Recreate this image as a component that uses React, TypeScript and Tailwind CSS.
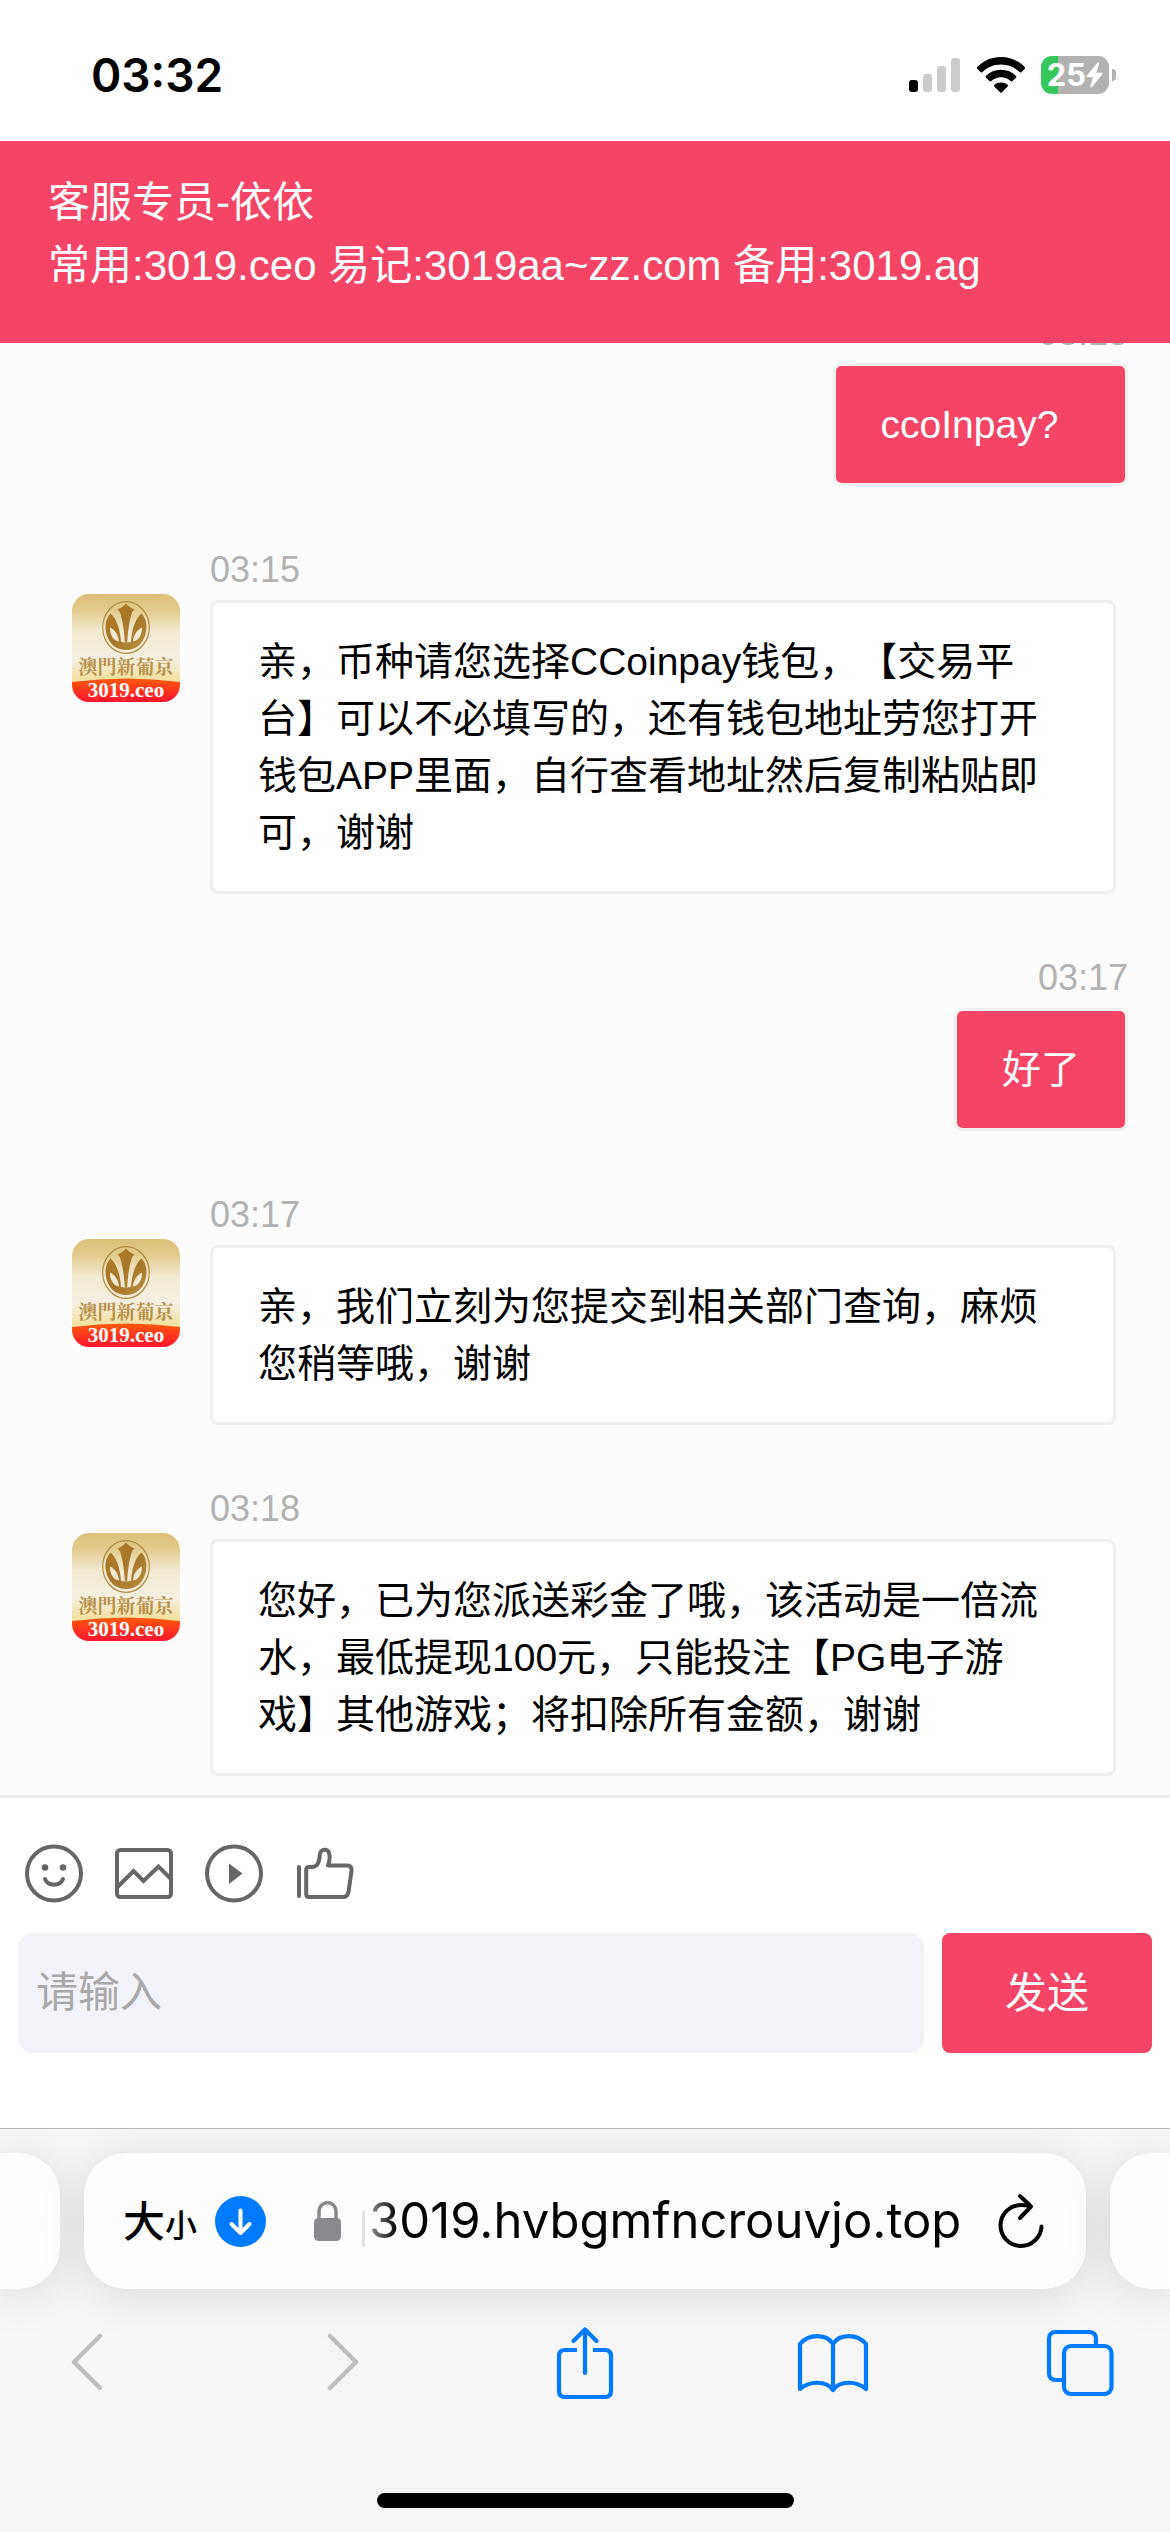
import React from "react";

type Message = { id: number; from: "agent" | "me"; time: string; text: string };

const messages: Message[] = [
  { id: 1, from: "me", time: "03:15", text: "ccoInpay?\u00a0\u00a0" },
  {
    id: 2,
    from: "agent",
    time: "03:15",
    text: "亲，币种请您选择CCoinpay钱包，【交易平台】可以不必填写的，还有钱包地址劳您打开钱包APP里面，自行查看地址然后复制粘贴即可，谢谢",
  },
  { id: 3, from: "me", time: "03:17", text: "好了" },
  { id: 4, from: "agent", time: "03:17", text: "亲，我们立刻为您提交到相关部门查询，麻烦您稍等哦，谢谢" },
  {
    id: 5,
    from: "agent",
    time: "03:18",
    text: "您好，已为您派送彩金了哦，该活动是一倍流水，最低提现100元，只能投注【PG电子游戏】其他游戏；将扣除所有金额，谢谢",
  },
];

function StatusBar() {
  return (
    <div className="flex h-[141px] shrink-0 items-center justify-between bg-white pt-2 pr-[54px] pl-[91px] font-['Inter',sans-serif]">
      <span className="text-[46px] leading-[48px] font-semibold text-black">03:32</span>
      <div className="flex items-center">
        <svg width="52" height="36" viewBox="0 0 52 36" aria-label="信号">
          <rect x="0" y="23" width="9" height="12" rx="3" fill="#000" />
          <rect x="14" y="17" width="9" height="18" rx="3" fill="#cbcbcb" />
          <rect x="28" y="9" width="9" height="26" rx="3" fill="#cbcbcb" />
          <rect x="42" y="1" width="9" height="34" rx="3" fill="#cbcbcb" />
        </svg>
        <svg className="ml-4" width="48" height="36" viewBox="0 0 48 36" aria-label="无线网络">
          <path d="M24 0C33.500 0 41.500 3.700 47.500 9.800Q48.500 11 47.500 12L44.300 15.200Q43.400 16 42.400 15.100C37.500 10.300 31.300 7.600 24 7.600S10.500 10.300 5.600 15.100Q4.600 16 3.700 15.200L.5 12Q-.5 11 .5 9.800C6.500 3.700 14.500 0 24 0Z" />
          <path d="M24 12.700C29.900 12.700 35 15 39 18.700Q40 19.700 39 20.700L35.500 24.100Q34.600 24.900 33.600 24C30.900 21.600 27.700 20.300 24 20.300S17.100 21.600 14.400 24Q13.400 24.900 12.500 24.100L9 20.700Q8 19.700 9 18.700C13 15 18.100 12.700 24 12.700Z" />
          <path d="M24 25.400C26.600 25.400 28.800 26.300 30.600 27.700Q31.600 28.600 30.600 29.600L25 35.200Q24 36.200 23 35.200L17.400 29.600Q16.400 28.600 17.400 27.700C19.200 26.300 21.400 25.400 24 25.400Z" />
        </svg>
        <div className="ml-4 flex h-[38px] w-[68px] items-center justify-center rounded-[11px] bg-[linear-gradient(90deg,#34c759_25%,#b2b2b2_25%)]">
          <span className="text-[31px] leading-[38px] font-bold text-white">25</span>
          <svg width="17" height="26" viewBox="0 0 17 26" fill="#fff" aria-hidden="true">
            <path d="M11.500 .5L.8 13.800Q.2 15.200 1.600 15.300H7L4.300 24.200Q4.300 26 5.900 25.100L16.300 12.200Q17 10.800 15.500 10.700H10.200L13.200 1.700Q13.200 -.3 11.500 .5Z" />
          </svg>
        </div>
        <div className="ml-[3px] h-3 w-1 rounded-r-full bg-[#b2b2b2]" />
      </div>
    </div>
  );
}

function Avatar() {
  return (
    <svg className="mt-[54px] shrink-0" width="108" height="108" viewBox="0 0 108 108" role="img" aria-label="澳門新葡京">
      <defs>
        <linearGradient id="gold" x1="0" y1="0" x2="0" y2="1">
          <stop offset="0" stopColor="#dcc078" />
          <stop offset=".15" stopColor="#e2cb8c" />
          <stop offset=".35" stopColor="#f2ead2" />
          <stop offset=".6" stopColor="#f5efe2" />
          <stop offset=".78" stopColor="#f2e2a4" />
          <stop offset="1" stopColor="#f2e2a4" />
        </linearGradient>
        <linearGradient id="red" x1="0" y1="0" x2="0" y2="1">
          <stop offset="0" stopColor="#ff5a0c" />
          <stop offset="1" stopColor="#ff1430" />
        </linearGradient>
        <linearGradient id="bronze" x1="0" y1="0" x2="1" y2="1">
          <stop offset="0" stopColor="#b07a26" />
          <stop offset=".5" stopColor="#a8762a" />
          <stop offset="1" stopColor="#bd9040" />
        </linearGradient>
        <clipPath id="tile">
          <rect width="108" height="108" rx="17" />
        </clipPath>
      </defs>
      <g clipPath="url(#tile)">
        <rect width="108" height="108" fill="url(#gold)" />
        <ellipse cx="54" cy="33.500" rx="23.300" ry="25.800" fill="none" stroke="#b48a3c" strokeWidth="1.200" />
        <g fill="url(#bronze)">
          <path d="M54 9.500C56 12 59 14 62.500 15.500C60.500 17 59.500 19 58.700 23C56.500 31 55.800 39 55.200 48.500H52.800C52.200 39 51.500 31 49.300 23C48.500 19 47.500 17 45.500 15.500C49 14 52 12 54 9.500Z" />
          <path d="M38.500 19.500C33.500 25 32.800 32 34.200 39C36.500 49.500 44 56 54 56S71.500 49.500 73.800 39C75.200 32 74.500 25 69.500 19.500C63 25 59.800 36 59 47.800C57.500 48.800 50.500 48.800 49 47.800C48.200 36 45 25 38.500 19.500Z" />
        </g>
        <path d="M38 33.500C37.800 40.500 41 46.500 47 47.500C46.500 41.500 43.500 36 38 33.500ZM70 33.500C70.200 40.500 67 46.500 61 47.500C61.500 41.500 64.500 36 70 33.500Z" fill="#f2ead2" />
        <text x="54" y="80" textAnchor="middle" fontSize="19" fontWeight="700" fill="#b99048" fontFamily="'Noto Serif CJK TC','Noto Sans CJK TC',serif">
          澳門新葡京
        </text>
        <path d="M0 88Q54 81 108 88V108H0Z" fill="url(#red)" />
        <text x="54" y="103" textAnchor="middle" fontSize="21" fontWeight="700" fill="#fff" fontFamily="'Liberation Serif',serif">
          3019.ceo
        </text>
      </g>
    </svg>
  );
}

function ChatMessage({ message }: { message: Message }) {
  if (message.from === "me") {
    return (
      <div className="flex flex-col items-end pr-[42px]">
        <time className="text-[36px] leading-[60px] text-[#b2b2b2]">{message.time}</time>
        <p className="rounded-lg border-[3px] border-[#f0f0f0] bg-[#f44566] bg-clip-padding px-[45px] py-[30px] text-[39px] leading-[57px] text-white">
          {message.text}
        </p>
      </div>
    );
  }
  return (
    <div className="flex items-start gap-[30px] pr-[54px] pl-[72px]">
      <Avatar />
      <div className="flex min-w-0 flex-1 flex-col">
        <time className="text-[36px] leading-[60px] text-[#b2b2b2]">{message.time}</time>
        <p className="rounded-lg border-[3px] border-[#f0f0f0] bg-white px-[45px] py-[30px] text-[39px] leading-[57px] text-black [text-spacing-trim:space-all]">
          {message.text}
        </p>
      </div>
    </div>
  );
}

function Tool({ label, children }: { label: string; children: React.ReactNode }) {
  return (
    <button type="button" aria-label={label} className="size-[60px]">
      <svg width="60" height="60" viewBox="0 0 60 60" fill="none" stroke="#666" strokeWidth="4" strokeLinecap="round" strokeLinejoin="round">
        {children}
      </svg>
    </button>
  );
}

function Composer() {
  return (
    <form className="shrink-0 border-t-[3px] border-[#ececec] bg-white px-[18px] pt-[45px] pb-[75px]" onSubmit={(e) => e.preventDefault()}>
      <div className="flex gap-[30px] pl-1.5">
        <Tool label="表情">
          <circle cx="30" cy="30.500" r="27" />
          <g fill="#666" stroke="none">
            <circle cx="21" cy="24.500" r="3.300" />
            <circle cx="39" cy="24.500" r="3.300" />
          </g>
          <path d="M21 36C24 43.500 36 43.500 39 36" />
        </Tool>
        <Tool label="图片">
          <rect x="3" y="7" width="54" height="47" rx="3.500" />
          <path d="M4 43.500L19.500 28L29.500 38L44.500 23.500L56 35" strokeLinejoin="miter" />
        </Tool>
        <Tool label="视频">
          <circle cx="30" cy="30.500" r="27" />
          <path d="M25 20.500V41L38.500 30.500Z" fill="#666" stroke="none" />
        </Tool>
        <Tool label="点赞">
          <path d="M5 24V53" />
          <path d="M34 22.500H54Q58 23 57.500 28L54.500 49Q53.500 54 49 54H15Q12.200 54 12.200 51V27Q12.200 24 15 24H18C24 24 25.500 19 25.800 12C26 5.500 34.500 5 35.300 11C36 15 35.500 19 34 22.500Z" />
        </Tool>
      </div>
      <div className="mt-[30px] flex gap-[18px]">
        <input
          type="text"
          aria-label="请输入"
          placeholder="请输入"
          className="h-[120px] min-w-0 flex-1 rounded-[15px] bg-[#f2f3f8] px-[18px] text-[42px] text-black placeholder:text-[#a9a9a9]"
        />
        <button type="submit" className="h-[120px] w-[210px] rounded-lg bg-[#f44566] text-[42px] text-white">
          发送
        </button>
      </div>
    </form>
  );
}

function BrowserBar() {
  const nav = "flex h-[78px] w-[78px] items-center";
  return (
    <div className="flex h-[404px] shrink-0 flex-col overflow-hidden border-t border-[#b9bbba] bg-[#f6f6f6] font-['Inter','Noto_Sans_CJK_SC',sans-serif]">
      <div className="mt-6 flex gap-6">
        <div className="h-[136px] w-[60px] rounded-r-[42px] bg-[#fdfdfd] shadow-[0_6px_48px_rgba(0,0,0,0.12)]" />
        <div className="flex h-[136px] min-w-0 flex-1 items-center rounded-[42px] bg-[#fdfdfd] pr-[42px] pl-[39px] shadow-[0_6px_48px_rgba(0,0,0,0.12)]">
          <button type="button" className="flex items-baseline font-medium text-black">
            <span className="text-[42px]">大</span>
            <span className="text-[32px]">小</span>
          </button>
          <button type="button" aria-label="下载" className="ml-[18px] shrink-0">
            <svg width="51" height="51" viewBox="0 0 51 51">
              <circle cx="25.500" cy="25.500" r="25.500" fill="#007aff" />
              <path d="M25.500 14.500V36M16.500 28L25.500 37L34.500 28" fill="none" stroke="#fff" strokeWidth="4" strokeLinecap="round" strokeLinejoin="round" />
            </svg>
          </button>
          <svg className="ml-12 shrink-0" width="27" height="40" viewBox="0 0 27 40" aria-hidden="true">
            <path d="M5 18V11C5 -1.500 22 -1.500 22 11V18" fill="none" stroke="#8a8a8e" strokeWidth="3.500" />
            <rect y="17" width="27" height="23" rx="4.500" fill="#8a8a8e" />
          </svg>
          <div className="mt-4 ml-[21px] h-9 w-[3px] shrink-0 bg-[#e4e4e4]" />
          <span className="ml-1 min-w-0 flex-1 text-[49px] leading-[60px] whitespace-nowrap text-black [mask-image:linear-gradient(90deg,rgba(0,0,0,0.4),#000_28px)]">
            3019.hvbgmfncrouvjo.top
          </span>
          <button type="button" aria-label="刷新" className="shrink-0">
            <svg width="46" height="56" viewBox="0 0 46 56" fill="none" stroke="#000" strokeWidth="4" strokeLinecap="round" strokeLinejoin="round">
              <path d="M22 3L33 13.500L22 25" />
              <path d="M32 13.500C29 12.300 26 12 23 12A20.500 20.500 0 1 0 43.500 33.500" />
            </svg>
          </button>
        </div>
        <div className="h-[136px] w-[60px] rounded-l-[42px] bg-[#fdfdfd] shadow-[0_6px_48px_rgba(0,0,0,0.12)]" />
      </div>
      <nav className="mt-[35px] flex justify-between px-[51px]">
        <button type="button" aria-label="后退" className={`${nav} justify-start pl-5`}>
          <svg width="32" height="60" viewBox="0 0 32 60" fill="none" stroke="#bfbfbf" strokeWidth="4.500" strokeLinecap="round" strokeLinejoin="round">
            <path d="M29 3L3 29L29 55" />
          </svg>
        </button>
        <button type="button" aria-label="前进" className={`${nav} justify-end pr-[18px]`}>
          <svg width="32" height="60" viewBox="0 0 32 60" fill="none" stroke="#bfbfbf" strokeWidth="4.500" strokeLinecap="round" strokeLinejoin="round">
            <path d="M3 3L29 29L3 55" />
          </svg>
        </button>
        <button type="button" aria-label="分享" className={`${nav} justify-center`}>
          <svg width="58" height="74" viewBox="0 0 58 74" fill="none" stroke="#007aff" strokeWidth="4.200" strokeLinecap="round" strokeLinejoin="round">
            <path d="M29 4V47M17.500 15L29 3.500L40.500 15" />
            <path d="M21 24H9Q3 24 3 30V65Q3 71 9 71H49Q55 71 55 65V30Q55 24 49 24H37" strokeLinecap="butt" />
          </svg>
        </button>
        <button type="button" aria-label="书签" className={`${nav} justify-center`}>
          <svg width="72" height="60" viewBox="0 0 72 60" fill="none" stroke="#007aff" strokeWidth="4.200" strokeLinecap="round" strokeLinejoin="round">
            <path d="M36 11C30 1 12 0 3 11V56C12 48 29 47 36 57C43 47 60 48 69 56V11C60 0 42 1 36 11V57" />
          </svg>
        </button>
        <button type="button" aria-label="标签页" className={`${nav} justify-center`}>
          <svg width="68" height="68" viewBox="0 0 68 68" fill="none" stroke="#007aff" strokeWidth="4.200">
            <path d="M17 51H10Q3 51 3 44V10Q3 3 10 3H43Q50 3 50 10V17" />
            <rect x="18" y="17" width="47.500" height="48" rx="7" />
          </svg>
        </button>
      </nav>
      <div className="mt-auto mb-6 h-[15px] w-[417px] self-center rounded-full bg-black" />
    </div>
  );
}

export default function App() {
  return (
    <div className="flex h-screen min-h-[1200px] w-full flex-col overflow-hidden bg-[#fcfcfc] font-['Liberation_Sans','Noto_Sans_CJK_SC',sans-serif]">
      <StatusBar />
      <header className="shrink-0 bg-[#f44566] px-[48px] pt-[30px] pb-[46px] text-[42px] leading-[63px] text-white">
        <h1>客服专员-依依</h1>
        <p>常用:3019.ceo 易记:3019aa~zz.com 备用:3019.ag</p>
      </header>
      <main className="flex min-h-0 flex-1 flex-col justify-end gap-[54px] overflow-hidden pb-[19px]">
        {messages.map((m) => (
          <ChatMessage key={m.id} message={m} />
        ))}
      </main>
      <Composer />
      <BrowserBar />
    </div>
  );
}
